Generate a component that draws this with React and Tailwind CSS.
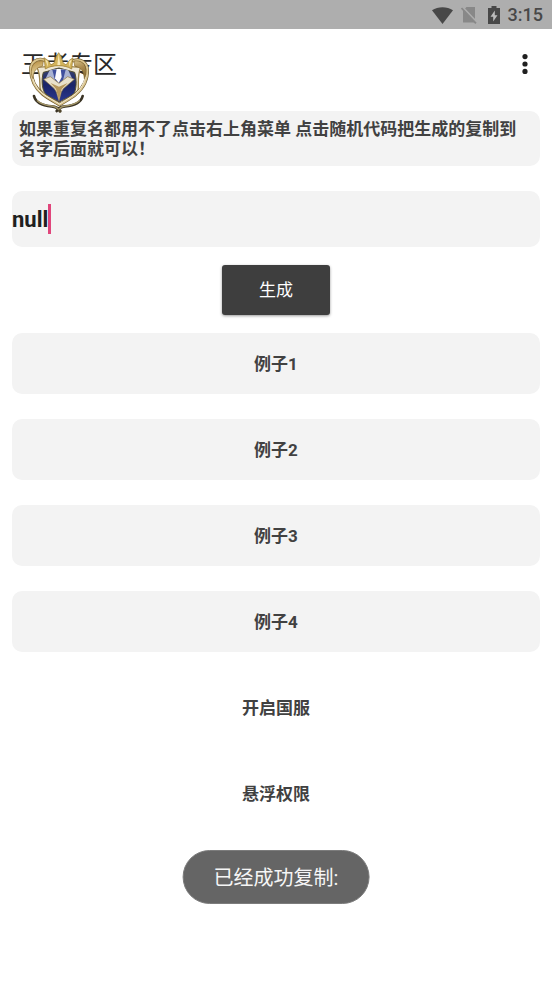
import React, { useState } from 'react';

const examples = ['例子1', '例子2', '例子3', '例子4'];
const actions = ['开启国服', '悬浮权限'];

function StatusBar() {
  return (
    <div className="flex h-[29px] items-center justify-end bg-[#aeaeae] pt-px pr-[9px] text-[#484848]">
      <svg className="mr-2 h-[17px] w-[21px]" viewBox="0 0 21 17" fill="currentColor">
        <path d="M0 3.2C6-.9 15-.9 21 3.2L10.500 17z" />
      </svg>
      <svg className="mr-[11px] h-[18px] w-4" viewBox="0 0 16 18">
        <path d="M5.500 1H14v15.500H2V4.800z" fill="#888" />
        <path d="M0 -.5 15.500 16" stroke="#aeaeae" strokeWidth="2" />
        <path d="M.5 2 15 17.300" stroke="#888" strokeWidth="1.800" />
      </svg>
      <svg className="mr-2 h-[18px] w-3" viewBox="0 0 12 18">
        <path d="M3.500 0h5v2H12v16H0V2h3.500z" fill="currentColor" />
        <path d="M6.800 4.500 2.500 10.800h2.700V15.500l4.300-6.300H6.800z" fill="#bdbdbd" />
      </svg>
      <span className="text-[18px] leading-5 font-medium">3:15</span>
    </div>
  );
}

// Floating crest with the crown, gold horns and blue shield
function Crest() {
  return (
    <svg className="absolute top-[22px] left-[26px] h-[62px] w-16" viewBox="78 60 192 186">
      <defs>
        <linearGradient id="gold" x1="0" y1="0" x2="1" y2="1">
          <stop offset="0" stopColor="#b58a3c" />
          <stop offset=".35" stopColor="#ddc88f" />
          <stop offset=".65" stopColor="#a9894d" />
          <stop offset="1" stopColor="#7d6430" />
        </linearGradient>
        <linearGradient id="blue" x1="0" y1="0" x2="0" y2="1">
          <stop offset="0" stopColor="#39446f" />
          <stop offset=".5" stopColor="#1a2468" />
          <stop offset="1" stopColor="#2a3890" />
        </linearGradient>
      </defs>
      {/* lower hooks */}
      <g fill="none" strokeLinecap="round">
        <path d="M102 195c5 20 27 29 53 31 14 1 21 7 25 14M248 195c-5 20-27 29-53 31-14 1-21 7-25 14" stroke="#3a3324" strokeWidth="8" />
        <path d="M112 209c12 11 25 14 43 16 12 2 18 6 22 12M238 209c-12 11-25 14-43 16-12 2-15 6-17 10" stroke="#a39567" strokeWidth="4" />
      </g>
      {/* shield frame */}
      <path d="M110 108c28 2 42-1 67-9 24 8 42 11 66 9-10 19-8 39-8 62-1 25-37 38-58 54-19-16-56-29-57-54-1-24 1-43-10-62z" fill="#eee7d3" stroke="#9b8247" strokeWidth="4" />
      <path d="M130 124c17-3 29-10 47-13 17 3 31 10 47 13 7 22 5 45 0 60-8 12-28 19-46 29-17-10-36-17-45-29-7-15-9-38-3-60z" fill="url(#blue)" stroke="#55502f" strokeWidth="3" />
      {/* gem */}
      <path d="M149 118c18-5 37-5 56 0l13 28-41 22-42-22z" fill="#a9b2d2" />
      <path d="m157 116 8 32 12 13 12-13 8-32z" fill="#3f4f9d" />
      <path d="m170 114-5 28 11 14 9-18-3-24z" fill="#fbfbfd" />
      <path d="m131 145 20-8 26 20 26-20 20 8-33 28-6 10-7 27-8-27-6-10z" fill="#e9e1cb" stroke="#907846" strokeWidth="2" />
      <path d="m152 156 25 11 26-11-18 18-8 34-9-34z" fill="#b6975b" />
      {/* horns */}
      <g fill="none" strokeLinecap="round">
        <path d="M132 87c-21-7-40 6-40 29 1 29 13 55 37 74 17 13 33 21 50 31 16-10 31-18 48-31 23-19 36-45 35-74-1-22-21-34-41-27" stroke="#756034" strokeWidth="10" />
        <path d="M132 87c-21-7-40 6-40 29 1 29 13 55 37 74 17 13 33 21 50 31 16-10 31-18 48-31 23-19 36-45 35-74-1-22-21-34-41-27" stroke="#dac48d" strokeWidth="6" />
        <path d="M96 134c5 22 15 40 32 54 17 13 34 20 51 31 16-11 31-18 48-31 16-14 26-32 31-54" stroke="#f4ecd4" strokeWidth="3" />
      </g>
      <path d="M130 90c-21-3-36 8-36 32 0 9 2 15 5 21 2-24 9-33 29-38zM222 90c21-3 36 8 36 32 0 9-2 15-5 21-2-24-9-33-29-38z" fill="url(#gold)" stroke="#8a6b30" strokeWidth="2" />
      {/* crown */}
      <path d="m132 80 13 9 8 13 10-7 5-18 8-12 8 12 5 18 9 7 9-13 12-9-4 34c-12-7-24-10-39-10s-29 3-40 10z" fill="#d3b45c" stroke="#96752c" strokeWidth="2" />
      <path d="m176 69-4 33h9zM136 86l8 22-1-18zM215 86l-8 22 1-18z" fill="#f6e8b8" />
      <circle cx="180" cy="240" r="5" fill="#51472d" />
    </svg>
  );
}

function CardButton({ children, plain }) {
  return (
    <button
      type="button"
      className={`h-[61px] w-full rounded-[10px] pt-0.5 text-[17px] font-bold text-[#414141] ${plain ? 'bg-transparent' : 'bg-[#f3f3f3]'}`}
    >
      {children}
    </button>
  );
}

export default function App() {
  const [name, setName] = useState('null');

  return (
    <div className="relative min-h-screen bg-white font-[Roboto,'Noto_Sans_CJK_SC',sans-serif]">
      <StatusBar />

      <header className="relative flex h-[82px] items-start justify-between pt-[18px] pr-[18px] pl-[21px]">
        <h1 className="text-[24px] leading-9 text-[#282828]">王者专区</h1>
        <button type="button" aria-label="菜单" className="flex h-[34px] w-[18px] items-center justify-center">
          <svg className="h-5 w-[6px]" viewBox="0 0 6 20" fill="#202020">
            <circle cx="3" cy="2.600" r="2.600" />
            <circle cx="3" cy="10" r="2.600" />
            <circle cx="3" cy="17.400" r="2.600" />
          </svg>
        </button>
        <Crest />
      </header>

      <main className="flex flex-col px-3">
        <p className="rounded-[10px] bg-[#f3f3f3] px-[7px] pt-2 pb-[7px] text-[17px] leading-5 font-bold text-[#414141]">
          如果重复名都用不了点击右上角菜单 点击随机代码把生成的复制到名字后面就可以！
        </p>

        <label className="mt-[25px] flex h-14 items-center rounded-[10px] bg-[#f3f3f3]">
          <input
            type="text"
            aria-label="名字"
            value={name}
            onChange={(e) => setName(e.target.value)}
            className="[field-sizing:content] bg-transparent pt-0.5 text-[22px] leading-7 font-bold text-[#202020] caret-[#e0457b] outline-none"
          />
          <span className="h-[30px] w-[3px] bg-[#e0457b]"></span>
        </label>

        <button
          type="button"
          className="mt-[18px] h-[50px] w-[108px] self-center rounded-[3px] bg-[#3e3e3e] pt-0.5 text-[17px] text-white shadow-[0_1px_3px_rgba(0,0,0,0.4)]"
        >
          生成
        </button>

        <div className="mt-[18px] flex flex-col gap-[25px]">
          {examples.map((label) => (
            <CardButton key={label}>{label}</CardButton>
          ))}
          {actions.map((label) => (
            <CardButton key={label} plain>{label}</CardButton>
          ))}
        </div>
      </main>

      {/* Toast */}
      <div role="status" className="fixed bottom-[79px] left-1/2 flex h-[54px] -translate-x-1/2 items-center rounded-full border border-[#7c7c7c] bg-[#656565] px-[30px] pt-0.5 text-[20px] whitespace-nowrap text-[#f5f5f5]">
        已经成功复制:
      </div>
    </div>
  );
}
